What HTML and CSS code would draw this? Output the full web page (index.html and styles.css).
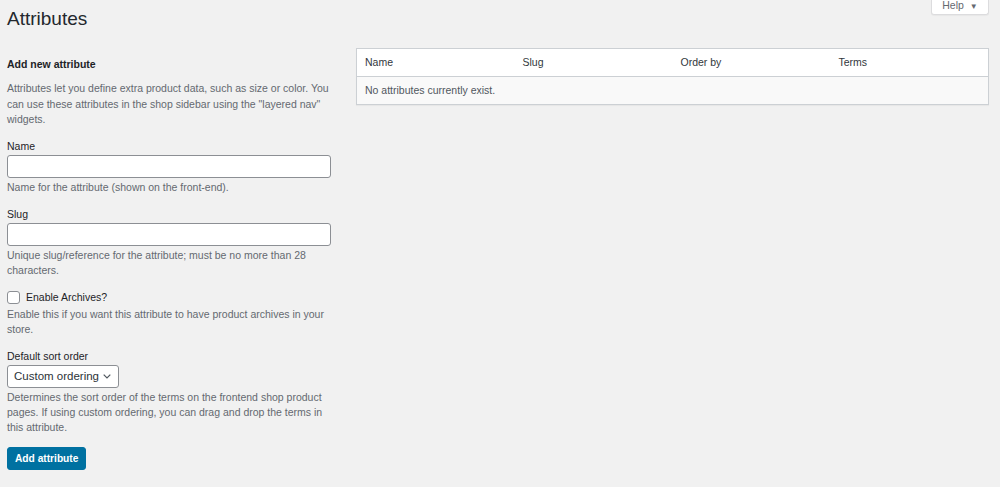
FILE: index.html
```html
<!DOCTYPE html>
<html>
<head>
<meta charset="utf-8">
<link rel="stylesheet" href="styles.css">
</head>
<body>
<div class="help-tab">Help <span class="arrow">▼</span></div>
<div class="wrap">
  <h1 class="title">Attributes</h1>
  <div class="cols">
    <div class="col-left">
      <h2 class="form-title">Add new attribute</h2>
      <p class="desc">Attributes let you define extra product data, such as size or color. You can use these attributes in the shop sidebar using the "layered nav" widgets.</p>
      <div class="field">
        <label class="label">Name</label>
        <input class="text-input" type="text">
        <p class="help">Name for the attribute (shown on the front-end).</p>
      </div>
      <div class="field">
        <label class="label">Slug</label>
        <input class="text-input" type="text">
        <p class="help">Unique slug/reference for the attribute; must be no more than 28 characters.</p>
      </div>
      <div class="field">
        <label class="check-row"><span class="checkbox"></span><span>Enable Archives?</span></label>
        <p class="help">Enable this if you want this attribute to have product archives in your store.</p>
      </div>
      <div class="field">
        <label class="label">Default sort order</label>
        <div class="select">Custom ordering <svg class="chev" width="8" height="5" viewBox="0 0 8 5"><path d="M0.7 0.7l3.3 3.3 3.3-3.3" fill="none" stroke="#50575e" stroke-width="1.2"/></svg></div>
        <p class="help">Determines the sort order of the terms on the frontend shop product pages. If using custom ordering, you can drag and drop the terms in this attribute.</p>
      </div>
      <button class="btn-primary">Add attribute</button>
    </div>
    <div class="col-right">
      <table class="attr-table">
        <thead>
          <tr><th>Name</th><th>Slug</th><th>Order by</th><th>Terms</th></tr>
        </thead>
        <tbody>
          <tr><td colspan="4">No attributes currently exist.</td></tr>
        </tbody>
      </table>
    </div>
  </div>
</div>
</body>
</html>
```

FILE: styles.css
```css
html, body {
  margin: 0;
  padding: 0;
  background: #f1f1f1;
}
body {
  font-family: "Liberation Sans", Arial, Helvetica, sans-serif;
  font-size: 10.5px;
  color: #444;
  line-height: 15px;
}
.wrap {
  padding: 0 11px 0 7px;
}
.title {
  margin: 0;
  padding: 7px 0 0;
  font-size: 19px;
  font-weight: 400;
  line-height: 24px;
  color: #23282d;
}
.help-tab {
  position: absolute;
  top: -1px;
  right: 11px;
  width: 58px;
  height: 16px;
  background: #fff;
  border: 1px solid #dcdcde;
  border-top: none;
  border-radius: 0 0 3px 3px;
  font-size: 10.5px;
  color: #646970;
  text-align: center;
  line-height: 12px;
  box-sizing: border-box;
  box-shadow: 0 1px 1px rgba(0,0,0,.04);
}
.help-tab .arrow {
  font-size: 8px;
  margin-left: 3px;
}
.cols {
  display: flex;
  gap: 25px;
  margin-top: 17px;
}
.col-left {
  width: 324px;
  flex: none;
  padding-top: 8px;
}
.col-right {
  flex: 1;
}
.form-title {
  margin: 0 0 9px;
  font-size: 10.5px;
  font-weight: 700;
  color: #1d2327;
  line-height: 16px;
}
.desc {
  margin: 0 0 11px;
  color: #646970;
  line-height: 15.5px;
}
.field {
  margin-bottom: 12px;
}
.label {
  display: block;
  color: #1d2327;
  line-height: 15px;
  margin-bottom: 1px;
}
.text-input {
  display: block;
  width: 324px;
  height: 23px;
  box-sizing: border-box;
  margin: 0;
  border: 1px solid #8c8f94;
  border-radius: 3px;
  background: #fff;
  padding: 0 6px;
}
.help {
  margin: 2px 0 0;
  color: #646970;
}
.check-row {
  display: flex;
  align-items: center;
  gap: 6px;
  color: #1d2327;
  line-height: 15px;
}
.checkbox {
  width: 13px;
  height: 13px;
  box-sizing: border-box;
  border: 1px solid #8c8f94;
  border-radius: 3px;
  background: #fff;
}
.select {
  display: inline-flex;
  align-items: center;
  gap: 4px;
  height: 23px;
  box-sizing: border-box;
  padding: 0 7px 0 6px;
  border: 1px solid #8c8f94;
  border-radius: 3px;
  background: #fff;
  font-size: 11.5px;
  color: #2c3338;
}
.btn-primary {
  display: block;
  margin: 0;
  height: 23px;
  padding: 0 7px;
  border: 1px solid #0071a1;
  border-radius: 3px;
  background: #0071a1;
  color: #fff;
  font-family: inherit;
  font-size: 10.2px;
  font-weight: 700;
  line-height: 21px;
}
.attr-table {
  width: 100%;
  margin-top: 0;
  border-collapse: collapse;
  border: 1px solid #ccd0d4;
  box-shadow: 0 1px 1px rgba(0,0,0,.04);
  table-layout: fixed;
  font-size: 10.5px;
}
.attr-table th {
  text-align: left;
  font-weight: 400;
  color: #32373c;
  background: #fff;
  padding: 6px 8px;
  height: 15px;
  border-bottom: 1px solid #ccd0d4;
}
.attr-table td {
  background: #f9f9f9;
  color: #50575e;
  padding: 6px 8px;
  height: 15px;
}
```
